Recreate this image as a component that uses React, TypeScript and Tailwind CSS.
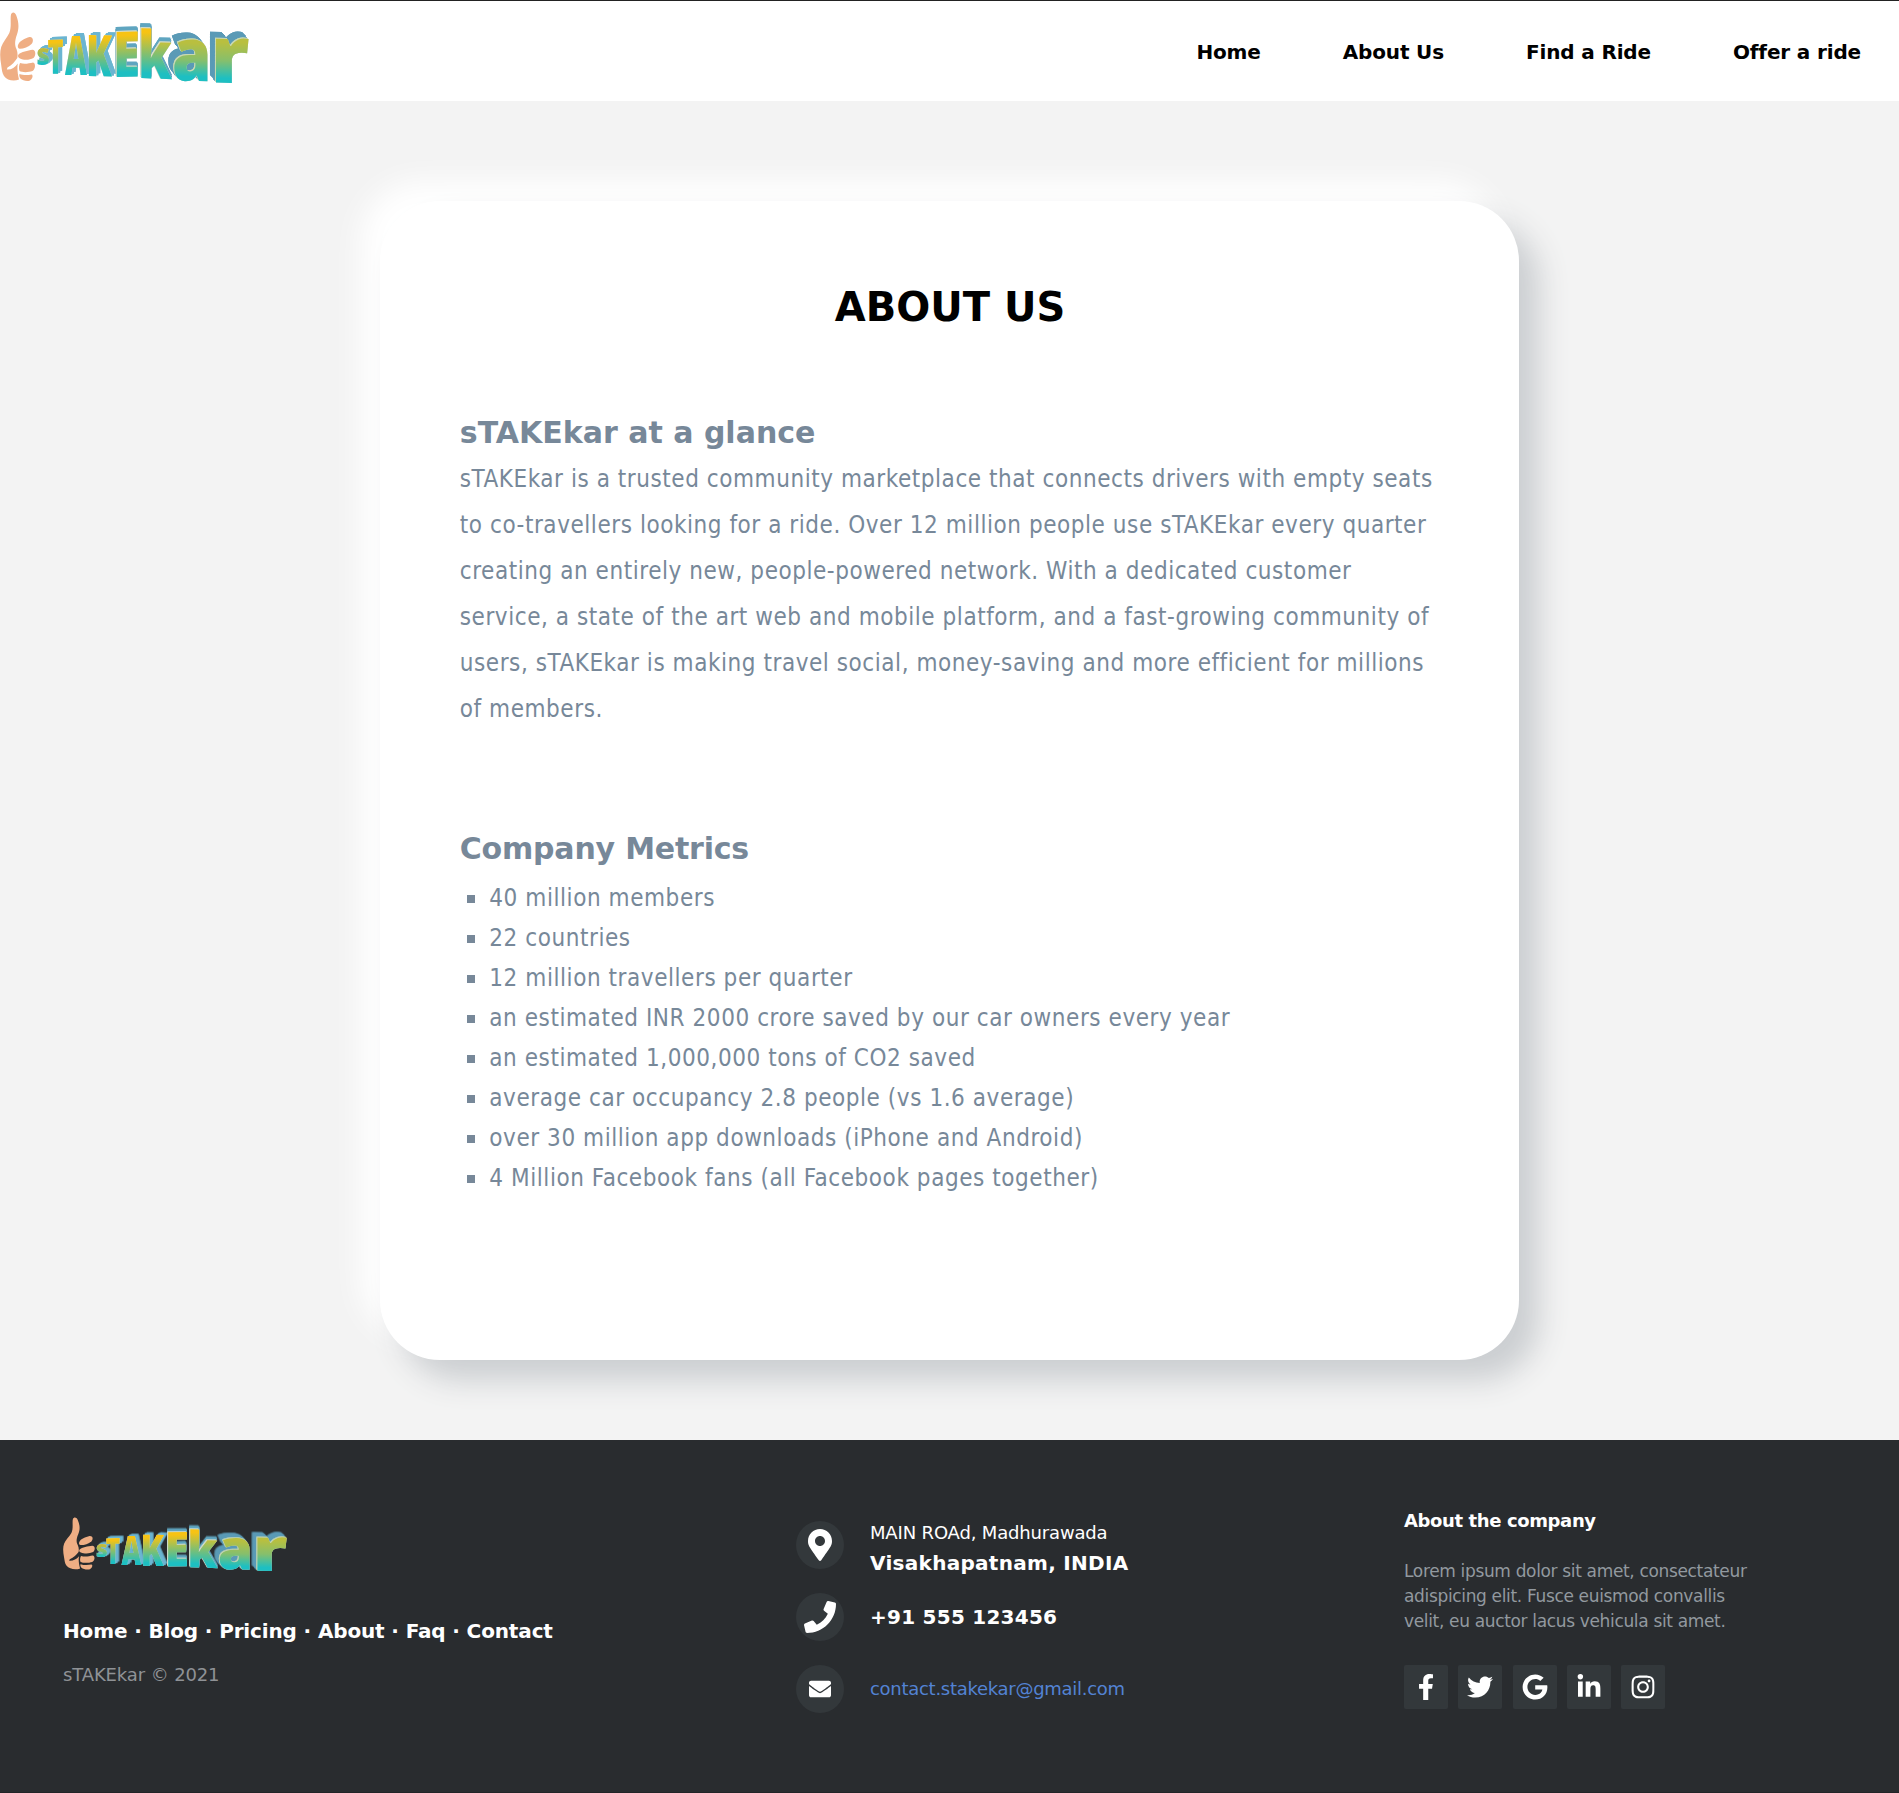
import React, { useId } from "react";
import {
  FaEnvelope,
  FaFacebookF,
  FaGoogle,
  FaInstagram,
  FaLinkedinIn,
  FaMapMarkerAlt,
  FaPhone,
  FaTwitter,
} from "react-icons/fa";

type Letter = {
  ch: string;
  x: number;
  w: number;
  base: number;
  h: number;
  ratio: number;
  skew: number;
  top: string;
};

// Small letters on the left, extruded to the right.
const leftLetters: Letter[] = [
  { ch: "s", x: 36.5, w: 13.5, base: 65, h: 17, ratio: 0.56, skew: 0, top: "#c2b93a" },
  { ch: "T", x: 47.5, w: 16, base: 74, h: 34, ratio: 0.714, skew: -2, top: "#f7c313" },
  { ch: "A", x: 65, w: 22, base: 75, h: 39, ratio: 0.714, skew: 0, top: "#f7c313" },
  { ch: "K", x: 86, w: 26, base: 76, h: 41, ratio: 0.714, skew: 1, top: "#f7c313" },
];

const midLetters: Letter[] = [
  { ch: "E", x: 113, w: 27, base: 77, h: 45, ratio: 0.714, skew: -1, top: "#f7c313" },
  { ch: "k", x: 138, w: 34, base: 78, h: 50, ratio: 0.76, skew: 2, top: "#f7c313" },
];

// Large letters on the right, extruded to the left.
const rightLetters: Letter[] = [
  { ch: "a", x: 172, w: 39.5, base: 80, h: 41, ratio: 0.56, skew: 2, top: "#b9bf3f" },
  { ch: "r", x: 210.5, w: 39, base: 82.5, h: 44, ratio: 0.555, skew: 1, top: "#b9bf3f" },
];

function Glyphs({ letters, id, className }: { letters: Letter[]; id: string; className: string }) {
  return (
    <g className={className}>
      {letters.map((l) => {
        const gid = `${id}-${l.ch}`;
        return (
          <g key={l.ch}>
            <linearGradient
              id={gid}
              gradientUnits="userSpaceOnUse"
              x1="0"
              x2="0"
              y1={-100 * l.ratio}
              y2="0"
            >
              <stop offset="0.08" stopColor={l.top} />
              <stop offset="0.5" stopColor="#86bf6c" />
              <stop offset="0.9" stopColor="#1dbfc2" />
            </linearGradient>
            <text
              transform={`translate(${l.x} ${l.base}) skewY(${l.skew}) scale(${l.w / 100} ${l.h / (l.ratio * 100)})`}
              textLength="100"
              lengthAdjust="spacingAndGlyphs"
              fill={`url(#${gid})`}
              className="text-[100px] font-extrabold [font-family:'Open_Sans',sans-serif]"
            >
              {l.ch}
            </text>
          </g>
        );
      })}
    </g>
  );
}

function Logo({ className }: { className: string }) {
  const id = useId().replace(/[^a-zA-Z0-9]/g, "");
  return (
    <svg viewBox="0 0 250 100" preserveAspectRatio="none" className={`overflow-visible ${className}`}>
      <g fill="#efae84">
        <path d="M11 14.5C12 11.6 15 11.8 16.3 15.5C18.8 22 19.3 28 16.8 35C15 40 14.3 45 16.5 49C17.6 52 17.8 55 17.3 58C15 61 12 65.500 7.500 67.500L6.800 69.500C11 70 15 67.500 17.800 63.500C17 68 17.600 74 19 79.500C14 81.800 7 80.500 4 76C2 73 1.800 69 1.200 65C0 58 -0.300 52 1.200 47C2.800 42 7 38 9.300 33C11.800 27 10 19 11 14.500Z" />
        <path d="M18 45C19.500 40.500 25 38.500 29.500 37C33 36.500 34 41 31.500 44C28.500 47 23 49 19.500 48.800C17.800 48.500 17.500 46.500 18 45Z" />
        <path d="M18.500 54.500C21 52 28 50.500 32.500 49.800C36 49.800 36 56 33.500 58C29 60.500 23 60 20 58.500C18 57.500 17.500 56 18.500 54.500Z" />
        <path d="M20 63C24 64.500 29 63.500 33 62.500C36 63 35.500 69.500 32.500 71C28.500 72.500 22 72.500 19.500 71C18.500 68.500 19 65 20 63Z" />
        <path d="M19.500 74C23 75.500 28 75.300 31.500 74.500C33.500 75 32.500 79 30 80.500C27 81.800 22.500 80.500 20.500 78.500C19.500 77 19 75.500 19.500 74Z" />
      </g>
      <Glyphs
        letters={rightLetters}
        id={id}
        className="[filter:drop-shadow(0.7px_0.9px_0_#c9cfcb)_drop-shadow(-0.7px_-0.7px_0_#c9d9b0)_drop-shadow(-1.500px_-2px_0_#5a9ab6)_drop-shadow(-2.500px_-3.500px_0_#5a9ab6)]"
      />
      <Glyphs
        letters={leftLetters}
        id={id}
        className="[filter:drop-shadow(0.7px_0.7px_0_#d5d9d5)_drop-shadow(2px_-1px_0_#6bb5d1)_drop-shadow(2px_-1.500px_0_#6bb5d1)]"
      />
      <Glyphs
        letters={midLetters}
        id={id}
        className="[filter:drop-shadow(0.7px_0.9px_0_#c9cfcb)_drop-shadow(-0.7px_-0.7px_0_#d9dfc8)_drop-shadow(0.5px_-2px_0_#5fa5c0)_drop-shadow(0.5px_-2px_0_#5fa5c0)]"
      />
    </svg>
  );
}

const nav = ["Home", "About Us", "Find a Ride", "Offer a ride"];

const about = [
  "sTAKEkar is a trusted community marketplace that connects drivers with empty seats",
  "to co-travellers looking for a ride. Over 12 million people use sTAKEkar every quarter",
  "creating an entirely new, people-powered network. With a dedicated customer",
  "service, a state of the art web and mobile platform, and a fast-growing community of",
  "users, sTAKEkar is making travel social, money-saving and more efficient for millions",
  "of members.",
];

const metrics = [
  "40 million members",
  "22 countries",
  "12 million travellers per quarter",
  "an estimated INR 2000 crore saved by our car owners every year",
  "an estimated 1,000,000 tons of CO2 saved",
  "average car occupancy 2.8 people (vs 1.6 average)",
  "over 30 million app downloads (iPhone and Android)",
  "4 Million Facebook fans (all Facebook pages together)",
];

const social = [FaFacebookF, FaTwitter, FaGoogle, FaLinkedinIn, FaInstagram];

function Disc({ children, className = "" }: { children: React.ReactNode; className?: string }) {
  return (
    <div
      className={`flex size-12 shrink-0 items-center justify-center rounded-full bg-[#33383b] text-white ${className}`}
    >
      {children}
    </div>
  );
}

export default function App() {
  return (
    <div className="flex h-[1793px] w-[1899px] flex-col overflow-hidden bg-[#f3f3f3] [font-family:'DejaVu_Sans',sans-serif]">
      <header className="flex h-[101px] shrink-0 items-start justify-between border-t border-[#222] bg-white">
        <Logo className="-mt-px h-[100px] w-[250px]" />
        <nav className="flex gap-[82px] pt-9 pr-[38px] text-[20px] leading-[30px] font-bold tracking-[-0.15px] text-black">
          {nav.map((n) => (
            <a key={n}>{n}</a>
          ))}
        </nav>
      </header>

      <main className="mx-auto mt-[100px] h-[1159px] w-3/5 shrink-0 rounded-[60px] bg-white px-20 pt-[82px] text-[#778899] shadow-[20px_20px_30px_#cbced1,-20px_-20px_30px_#ffffff]">
        <h1 className="pl-px text-center text-[40px] leading-[48px] font-bold text-black">ABOUT US</h1>
        <h2 className="mt-[84px] text-[30px] leading-9 font-bold">sTAKEkar at a glance</h2>
        <p className="mt-[5px] text-[24px] leading-[46px] tracking-[0.55px] whitespace-nowrap [font-family:'DejaVu_Sans_Condensed','DejaVu_Sans',sans-serif]">
          {about.map((line) => (
            <span key={line} className="block">
              {line}
            </span>
          ))}
        </p>
        <h2 className="mt-[99px] text-[30px] leading-9 font-bold tracking-[-0.2px]">Company Metrics</h2>
        <ul className="mt-[11px] text-[24px] leading-10 tracking-[0.56px] whitespace-nowrap [font-family:'DejaVu_Sans_Condensed','DejaVu_Sans',sans-serif]">
          {metrics.map((m) => (
            <li key={m} className="flex items-center pl-[7px]">
              <span className="mt-px mr-[14.500px] size-2 bg-[#778899]" />
              {m}
            </li>
          ))}
        </ul>
      </main>

      <footer className="mt-20 grid h-[353px] shrink-0 grid-cols-[733px_608px_1fr] border-b border-[#212427] bg-[#292c2f] pl-[63px] whitespace-nowrap">
        <section className="pt-[68px]">
          <Logo className="h-[76px] w-[225px]" />
          <p className="mt-[32px] text-[20px] leading-[30px] font-bold tracking-[-0.14px] text-white">
            Home · Blog · Pricing · About · Faq · Contact
          </p>
          <p className="mt-[17px] text-[18px] leading-6 tracking-[-0.12px] text-[#8f9296]">
            sTAKEkar © 2021
          </p>
        </section>

        <section className="pt-[79px] text-[18px] text-white">
          <div className="flex gap-[26px]">
            <Disc className="mt-0.5">
              <FaMapMarkerAlt size={32} />
            </Disc>
            <p className="-mt-px leading-[30px]">
              <span className="block tracking-[-0.16px]">MAIN ROAd, Madhurawada</span>
              <span className="block text-[20px] font-bold tracking-[0.29px]">Visakhapatnam, INDIA</span>
            </p>
          </div>
          <div className="mt-[15px] flex gap-[26px]">
            <Disc>
              <FaPhone size={32} />
            </Disc>
            <p className="text-[20px] leading-[48px] font-bold tracking-[0.25px]">+91 555 123456</p>
          </div>
          <div className="mt-6 flex gap-[26px]">
            <Disc>
              <FaEnvelope size={22} />
            </Disc>
            <p className="leading-[48px] tracking-[-0.28px] text-[#5383d3]">
              contact.stakekar@gmail.com
            </p>
          </div>
        </section>

        <section className="pt-[69px]">
          <h3 className="text-[18px] leading-6 font-bold tracking-[-0.38px] text-white">
            About the company
          </h3>
          <p className="mt-[26px] text-[17px] leading-[25px] tracking-[-0.34px] text-[#92999f]">
            Lorem ipsum dolor sit amet, consectateur
            <br />
            adispicing elit. Fusce euismod convallis
            <br />
            velit, eu auctor lacus vehicula sit amet.
          </p>
          <div className="mt-[31px] flex gap-[10.300px]">
            {social.map((Icon, i) => (
              <a
                key={i}
                className="flex size-11 items-center justify-center rounded-xs bg-[#33383b] text-white"
              >
                <Icon size={26} />
              </a>
            ))}
          </div>
        </section>
      </footer>
    </div>
  );
}
